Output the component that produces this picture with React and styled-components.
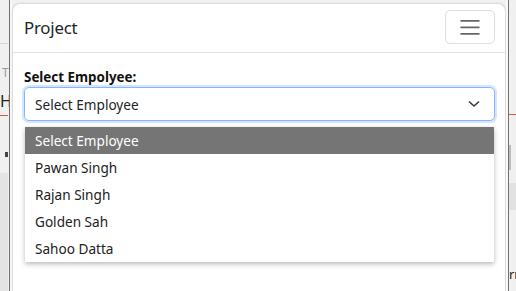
import React from "react";
import styled, { createGlobalStyle } from "styled-components";

const GlobalStyle = createGlobalStyle`
  html, body { margin: 0; padding: 0; }
  body {
    background: #f1f1f1;
    font-family: "Noto Sans", "Open Sans", sans-serif;
    color: #212529;
    overflow: hidden;
  }
`;

const Page = styled.div`
  width: 516px;
  height: 291px;
  display: flex;
  overflow: hidden;
  background: #f1f1f1;
`;

const SideStrip = styled.div`
  width: ${(p) => p.$w}px;
  flex: none;
  display: flex;
  flex-direction: ${(p) => (p.$right ? "row-reverse" : "row")};
`;

const PageColumn = styled.div`
  position: relative;
  width: ${(p) => p.$w}px;
  flex: none;
  background: #f0f0f0;
  ${(p) => (p.$right ? "border-left" : "border-right")}: 1px solid #707070;
  overflow: hidden;
`;

const Gap = styled.div`
  flex: 1;
  background: #f9f9f9;
`;

const Mark = styled.div`
  position: absolute;
  left: ${(p) => p.$x}px;
  top: ${(p) => p.$y}px;
  width: ${(p) => p.$w}px;
  height: ${(p) => p.$h}px;
  background: ${(p) => p.$c};
`;

const Glyph = styled.span`
  position: absolute;
  left: ${(p) => p.$x}px;
  top: ${(p) => p.$y}px;
  font-family: "Noto Sans", sans-serif;
  font-size: ${(p) => p.$s}px;
  line-height: 1;
  color: ${(p) => p.$c};
`;

const Modal = styled.div`
  flex: 1;
  margin-top: 3px;
  background: #fff;
  border: 1px solid #dcdcdc;
  border-bottom: none;
  border-radius: 8px 8px 0 0;
  box-shadow: 0 0 3px rgba(0, 0, 0, 0.06);
  display: flex;
  flex-direction: column;
`;

const Header = styled.div`
  height: 48px;
  border-bottom: 1px solid #dee2e6;
  display: flex;
  align-items: center;
  justify-content: space-between;
  padding: 0 10px 0 11px;
`;

const Title = styled.h5`
  margin: 0;
  font-family: "Noto Sans", sans-serif;
  font-weight: 400;
  font-size: 16.8px;
  letter-spacing: -0.2px;
  color: #212529;
  padding-bottom: 2px;
`;

const Toggler = styled.button`
  width: 50px;
  height: 34px;
  margin-top: -2px;
  background: #fff;
  border: 1px solid #dedede;
  border-radius: 5px;
  display: flex;
  align-items: center;
  justify-content: center;
  padding: 0;
`;

const Body = styled.div`
  padding: 16px 10px 0 11px;
  display: flex;
  flex-direction: column;
`;

const Label = styled.label`
  font-family: "Noto Sans", sans-serif;
  font-weight: 700;
  font-size: 13.4px;
  line-height: 16px;
  color: #111;
  margin-bottom: 2px;
`;

const SelectWrap = styled.div`
  position: relative;
`;

const SelectBox = styled.div`
  height: 34px;
  box-sizing: border-box;
  border: 1px solid #86b7fe;
  border-radius: 5px;
  box-shadow: 0 0 0 2px rgba(13, 110, 253, 0.18);
  display: flex;
  align-items: center;
  justify-content: space-between;
  padding: 0 14px 0 10px;
  font-size: 13.6px;
  color: #212529;
`;

const List = styled.div`
  position: absolute;
  left: 1px;
  right: 1px;
  top: 40px;
  background: #fff;
  box-shadow: 0 2px 5px rgba(0, 0, 0, 0.28);
  display: flex;
  flex-direction: column;
`;

const Item = styled.div`
  height: 27px;
  display: flex;
  align-items: center;
  padding: 0 10px;
  font-size: 13.6px;
  color: ${(p) => (p.$active ? "#fff" : "#222")};
  background: ${(p) => (p.$active ? "#757575" : "#fff")};
`;

const Chevron = () => (
  <svg width="12" height="8" viewBox="0 0 12 8">
    <path d="M1 1.5 L6 6 L11 1.5" fill="none" stroke="#343a40" strokeWidth="1.6" />
  </svg>
);

const Burger = () => (
  <svg width="26" height="26" viewBox="0 0 30 30">
    <path
      d="M4 8h22M4 15.5h22M4 23h22"
      stroke="rgba(33,37,41,0.7)"
      strokeWidth="2"
      strokeLinecap="butt"
    />
  </svg>
);

const employees = ["Select Employee", "Pawan Singh", "Rajan Singh", "Golden Sah", "Sahoo Datta"];

export default function App() {
  return (
    <>
      <GlobalStyle />
      <Page>
        <SideStrip $w={12}>
          <PageColumn $w={9}>
            <Mark $x={0} $y={43} $w={8} $h={1} $c="#d6d6d6" />
            <Glyph $x={2} $y={67} $s={12} $c="#9a9a9a">T</Glyph>
            <Glyph $x={0} $y={93} $s={16} $c="#222">H</Glyph>
            <Mark $x={0} $y={115} $w={8} $h={1} $c="#d9534f" />
            <Mark $x={5} $y={152} $w={3} $h={5} $c="#444" />
            <Mark $x={0} $y={173} $w={8} $h={118} $c="#e4e4e4" />
          </PageColumn>
          <Gap />
        </SideStrip>
        <Modal>
          <Header>
            <Title>Project</Title>
            <Toggler aria-label="Toggle navigation">
              <Burger />
            </Toggler>
          </Header>
          <Body>
            <Label>Select Empolyee:</Label>
            <SelectWrap>
              <SelectBox>
                <span>Select Employee</span>
                <Chevron />
              </SelectBox>
              <List>
                {employees.map((e, i) => (
                  <Item key={e} $active={i === 0}>
                    {e}
                  </Item>
                ))}
              </List>
            </SelectWrap>
          </Body>
        </Modal>
        <SideStrip $w={10} $right>
          <PageColumn $w={7} $right>
            <Mark $x={0} $y={114} $w={7} $h={1} $c="#d9534f" />
            <Mark $x={0} $y={145} $w={2} $h={25} $c="#bdbdbd" />
            <Mark $x={0} $y={183} $w={7} $h={27} $c="#e2e2e2" />
            <Glyph $x={0} $y={268} $s={13} $c="#222">rr</Glyph>
          </PageColumn>
          <Gap />
        </SideStrip>
      </Page>
    </>
  );
}
